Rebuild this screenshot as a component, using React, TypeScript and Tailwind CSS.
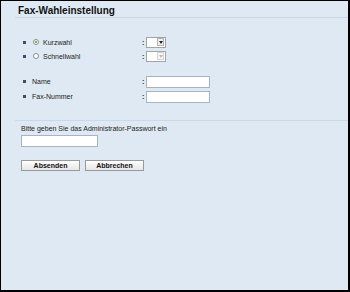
function Bullet() {
  return <span className="w-[3px] h-[3px] bg-[#3d4c6d] shrink-0" />;
}

function Radio({ checked }: { checked?: boolean }) {
  return (
    <span className="ml-[7px] w-[6px] h-[6px] rounded-full border border-[#8a8a8a] bg-white flex items-center justify-center shrink-0">
      {checked && <span className="w-[2px] h-[2px] rounded-full bg-[#2f9e2f]" />}
    </span>
  );
}

function Select({ disabled }: { disabled?: boolean }) {
  return (
    <div className="w-[20px] h-[11px] border border-[#a4a4a4] bg-white flex justify-end items-center pr-[1px]">
      <div
        className={`w-[7px] h-[8px] border flex items-center justify-center ${
          disabled ? "border-[#d4d4d4] bg-[#f6f6f6]" : "border-[#b4b4b4] bg-[#f0f0f0]"
        }`}
      >
        <svg width="4" height="3" viewBox="0 0 4 3">
          <path d="M0 0h4L2 3z" fill={disabled ? "#bcbcbc" : "#222"} />
        </svg>
      </div>
    </div>
  );
}

function Row({
  label,
  radio,
  checked,
  tall,
  children,
}: {
  label: string;
  radio?: boolean;
  checked?: boolean;
  tall?: boolean;
  children: React.ReactNode;
}) {
  return (
    <div className={`flex items-center pl-[22px] ${tall ? "h-[15px]" : "h-[14px]"}`}>
      <div className="w-[119px] flex items-center">
        <Bullet />
        {radio && <Radio checked={checked} />}
        <span className={radio ? "ml-[4px]" : "ml-[6px]"}>{label}</span>
      </div>
      <span className="w-[4px] font-bold">:</span>
      {children}
    </div>
  );
}

export default function App() {
  return (
    <div className="w-[350px] h-[292px] border-t border-l border-r-2 border-b-2 border-black bg-[#dfe9f3] font-['Liberation_Sans',Arial,sans-serif] text-[#222] overflow-hidden">
      <div className="ml-[14px] pt-[4px] border-b border-[#c9d8ea]">
        <h1 className="pl-[3px] text-[10px] leading-[12px] font-bold text-[#111]">
          Fax-Wahleinstellung
        </h1>
      </div>

      <div className="mt-[17px] text-[7px] leading-[9px]">
        <Row label="Kurzwahl" radio checked>
          <Select />
        </Row>
        <Row label="Schnellwahl" radio>
          <Select disabled />
        </Row>

        <div className="h-[11px]" />

        <Row label="Name" tall>
          <div className="w-[64px] h-[12px] border border-[#a8b4c4] bg-white" />
        </Row>
        <Row label="Fax-Nummer" tall>
          <div className="w-[64px] h-[12px] border border-[#a8b4c4] bg-white" />
        </Row>
      </div>

      <div className="mt-[16px] ml-[14px] border-t border-[#c9d8ea]" />

      <div className="pl-[20px] text-[7px] leading-[9px]">
        <p className="mt-[3px]">Bitte geben Sie das Administrator-Passwort ein</p>
        <div className="mt-[2px] w-[77px] h-[12px] border border-[#a8b4c4] bg-white" />
        <div className="mt-[13px] flex gap-[5px]">
          <button className="w-[59px] h-[11px] border border-[#9a9a9a] bg-gradient-to-b from-white to-[#e6e6e6] font-bold leading-[9px] text-[#111]">
            Absenden
          </button>
          <button className="w-[59px] h-[11px] border border-[#9a9a9a] bg-gradient-to-b from-white to-[#e6e6e6] font-bold leading-[9px] text-[#111]">
            Abbrechen
          </button>
        </div>
      </div>
    </div>
  );
}
